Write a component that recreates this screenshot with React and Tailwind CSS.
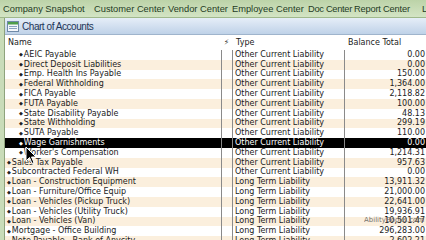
import React from 'react';

const rows = [
  { name: 'AEIC Payable', sub: true, type: 'Other Current Liability', bal: '0.00' },
  { name: 'Direct Deposit Liabilities', sub: true, type: 'Other Current Liability', bal: '0.00' },
  { name: 'Emp. Health Ins Payable', sub: true, type: 'Other Current Liability', bal: '150.00' },
  { name: 'Federal Withholding', sub: true, type: 'Other Current Liability', bal: '1,364.00' },
  { name: 'FICA Payable', sub: true, type: 'Other Current Liability', bal: '2,118.82' },
  { name: 'FUTA Payable', sub: true, type: 'Other Current Liability', bal: '100.00' },
  { name: 'State Disability Payable', sub: true, type: 'Other Current Liability', bal: '48.13' },
  { name: 'State Withholding', sub: true, type: 'Other Current Liability', bal: '299.19' },
  { name: 'SUTA Payable', sub: true, type: 'Other Current Liability', bal: '110.00' },
  { name: 'Wage Garnishments', sub: true, type: 'Other Current Liability', bal: '0.00', sel: true },
  { name: "Worker's Compensation", sub: true, type: 'Other Current Liability', bal: '1,214.31' },
  { name: 'Sales Tax Payable', type: 'Other Current Liability', bal: '957.63' },
  { name: 'Subcontracted Federal WH', type: 'Other Current Liability', bal: '0.00' },
  { name: 'Loan - Construction Equipment', type: 'Long Term Liability', bal: '13,911.32' },
  { name: 'Loan - Furniture/Office Equip', type: 'Long Term Liability', bal: '21,000.00' },
  { name: 'Loan - Vehicles (Pickup Truck)', type: 'Long Term Liability', bal: '22,641.00' },
  { name: 'Loan - Vehicles (Utility Truck)', type: 'Long Term Liability', bal: '19,936.91' },
  { name: 'Loan - Vehicles (Van)', type: 'Long Term Liability', bal: '10,501.47' },
  { name: 'Mortgage - Office Building', type: 'Long Term Liability', bal: '296,283.00' },
  { name: 'Note Payable - Bank of Anycity', type: 'Long Term Liability', bal: '2,602.21' },
];

const font = { fontFamily: 'Tahoma, "DejaVu Sans", sans-serif' };
const ui = { fontFamily: '"Liberation Sans", Arial, sans-serif' };

export default function App() {
  return (
    <div className="relative w-[426px] h-[240px] overflow-hidden bg-[#c9dcb9]" style={font}>
      {/* top toolbar */}
      <div className="h-[18px] flex items-end pb-[1px] pl-[3px] text-[9.3px] leading-[13px] text-[#1f3b1f] bg-gradient-to-b from-[#bcd3a8] to-[#d3e4c4] border-b border-[#9fb88c] whitespace-nowrap" style={ui}>
        <span className="w-[91px] shrink-0">Company Snapshot</span>
        <span className="w-[74px] shrink-0">Customer Center</span>
        <span className="w-[64px] shrink-0">Vendor Center</span>
        <span className="w-[76px] shrink-0">Employee Center</span>
        <span className="w-[46px] shrink-0 tracking-[-0.3px]">Doc Center</span>
        <span className="w-[68px] shrink-0 tracking-[-0.2px]">Report Center</span>
        <span>L</span>
      </div>

      <div className="flex h-[222px]">
        <div className="w-[5px] shrink-0 bg-[#c9dcb9] border-r border-[#8ea37d]" />
        <div className="flex-1 min-w-0 flex flex-col bg-white">
          {/* title bar */}
          <div className="h-[17px] shrink-0 flex items-center gap-[3px] pl-[2px] bg-gradient-to-b from-[#e6eef8] to-[#bfd2e8] border-b border-[#9fb4cc]">
            <svg width="12" height="11" viewBox="0 0 12 11">
              <rect x="0.5" y="0.5" width="11" height="10" fill="#f4f7fb" stroke="#6f8aa8" />
              <rect x="1" y="1" width="10" height="2.5" fill="#4f9d4a" />
              <line x1="2" y1="5.5" x2="10" y2="5.5" stroke="#8aa3c0" />
              <line x1="2" y1="7.5" x2="10" y2="7.5" stroke="#8aa3c0" />
            </svg>
            <span className="text-[10px] tracking-[-0.45px] text-[#1d3557]" style={ui}>Chart of Accounts</span>
          </div>

          {/* header */}
          <div className="h-[15px] shrink-0 flex items-center pt-[1px] text-[8px] text-[#222] bg-white">
            <div className="w-[216px] shrink-0 pl-[3px]">Name</div>
            <div className="w-[11px] shrink-0 text-center text-[8px] text-[#333]">⚡</div>
            <div className="w-[112px] shrink-0 pl-[4px]">Type</div>
            <div className="shrink-0 pl-[4px]">Balance Total</div>
          </div>

          {/* rows */}
          {rows.map((r, i) => (
            <div
              key={r.name}
              className={`h-[9.8px] shrink-0 flex items-center text-[8px] leading-none whitespace-nowrap ${
                r.sel ? 'bg-black text-white' : i % 2 === 0 ? 'bg-white text-[#222]' : 'bg-[#fbefdd] text-[#222]'
              }`}
            >
              <div className={`w-[216px] shrink-0 h-full flex items-center ${r.sub ? 'pl-[14px]' : 'pl-[2px]'}`}>
                <span className="text-[5px] mr-[1px]">◆</span>
                {r.name}
              </div>
              <div className="w-[11px] shrink-0 h-full border-l border-[#8a8a8a]" />
              <div className="w-[112px] shrink-0 h-full flex items-center pl-[2px] border-l border-[#8a8a8a]">{r.type}</div>
              <div className="w-[81px] shrink-0 h-full flex items-center justify-end border-l border-[#8a8a8a]">{r.bal}</div>
            </div>
          ))}
        </div>
      </div>

      {/* watermark */}
      <div className="absolute left-[364px] top-[215px] text-[7px] text-[#555] opacity-80">AbilityBooks.com</div>

      {/* mouse cursor */}
      <svg className="absolute left-[25px] top-[146px]" width="12" height="19" viewBox="0 0 12 19">
        <path d="M1 1 L1 15 L4.5 11.5 L7 17.5 L9 16.5 L6.5 11 L11 11 Z" fill="#000" stroke="#fff" strokeWidth="1" />
      </svg>
    </div>
  );
}
